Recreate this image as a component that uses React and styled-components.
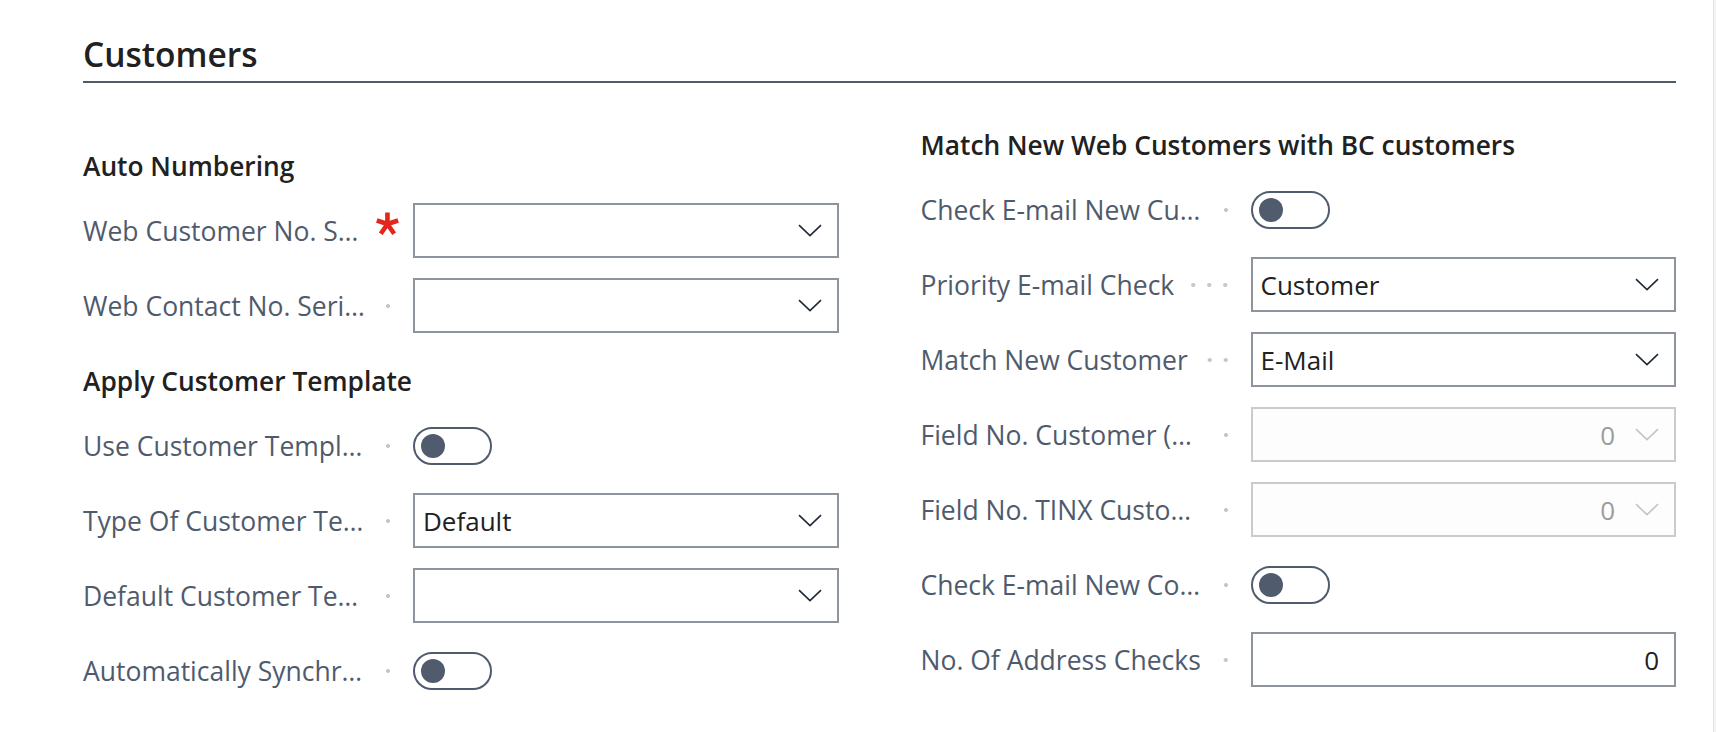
import React from "react";
import styled, { createGlobalStyle } from "styled-components";

const GlobalStyle = createGlobalStyle`
  html, body {
    margin: 0;
    padding: 0;
    background: #ffffff;
  }
  body {
    font-family: "Segoe UI", "Open Sans", "Noto Sans", sans-serif;
    color: #212121;
  }
  * {
    box-sizing: border-box;
  }
`;

const left = [
  { type: "heading", text: "Auto Numbering" },
  { type: "select", label: "Web Customer No. Series", required: true },
  { type: "select", label: "Web Contact No. Series" },
  { type: "heading", text: "Apply Customer Template" },
  { type: "toggle", label: "Use Customer Template" },
  { type: "select", label: "Type Of Customer Template", value: "Default" },
  { type: "select", label: "Default Customer Template" },
  { type: "toggle", label: "Automatically Synchronize Customers" },
];

const right = [
  { type: "heading", text: "Match New Web Customers with BC customers" },
  { type: "toggle", label: "Check E-mail New Customer" },
  { type: "select", label: "Priority E-mail Check", value: "Customer" },
  { type: "select", label: "Match New Customer", value: "E-Mail" },
  { type: "select", label: "Field No. Customer (Match)", value: "0", disabled: true },
  { type: "select", label: "Field No. TINX Customer (Match)", value: "0", disabled: true },
  { type: "toggle", label: "Check E-mail New Contact" },
  { type: "number", label: "No. Of Address Checks", value: "0" },
];

function Chevron({ disabled }) {
  return (
    <ChevronSvg viewBox="0 0 24 13" $disabled={disabled}>
      <path d="M1 1.2 L12 11.6 L23 1.2" />
    </ChevronSvg>
  );
}

function Asterisk() {
  return (
    <AsteriskSvg viewBox="0 0 28 28">
      <path d="M14 1 V14 M14 14 L2 10 M14 14 L26 10 M14 14 L6.5 25 M14 14 L21.5 25" />
    </AsteriskSvg>
  );
}

function Field({ item }) {
  if (item.type === "toggle") {
    return (
      <Toggle role="switch" aria-checked="false">
        <Knob />
      </Toggle>
    );
  }
  if (item.type === "number") {
    return (
      <Box>
        <Value $align="right">{item.value}</Value>
      </Box>
    );
  }
  return (
    <Box $disabled={item.disabled}>
      <Value $align={item.disabled ? "right" : "left"} $disabled={item.disabled}>
        {item.value || ""}
      </Value>
      <Chevron disabled={item.disabled} />
    </Box>
  );
}

function Column({ items, offset }) {
  return (
    <Col $offset={offset}>
      {items.map((item, i) =>
        item.type === "heading" ? (
          <GroupHeading key={i}>{item.text}</GroupHeading>
        ) : (
          <Row key={i}>
            <Caption>
              <CaptionText title={item.label}>{item.label}</CaptionText>
              {item.required ? (
                <Required>
                  <Asterisk />
                </Required>
              ) : (
                <Leader />
              )}
            </Caption>
            <Field item={item} />
          </Row>
        )
      )}
    </Col>
  );
}

export default function App() {
  return (
    <>
      <GlobalStyle />
      <Frame>
        <Main>
          <Header>Customers</Header>
          <Columns>
            <Column items={left} offset={21} />
            <Column items={right} offset={0} />
          </Columns>
        </Main>
        <Edge />
      </Frame>
    </>
  );
}

const Frame = styled.div`
  display: flex;
  width: 100%;
  height: 732px;
  overflow: hidden;
`;

const Main = styled.main`
  flex: 1;
  padding: 0 37px 0 83px;
`;

const Edge = styled.div`
  width: 3px;
  background: #f4f4f4;
  border-left: 1px solid #e2e2e2;
`;

const Header = styled.h1`
  margin: 0;
  padding: 36px 0 9px;
  line-height: 36px;
  font-size: 33.5px;
  font-weight: 600;
  color: #212121;
  border-bottom: 2px solid #505c6d;
`;

const Columns = styled.div`
  display: grid;
  grid-template-columns: 1fr 1fr;
  column-gap: 82px;
  padding-top: 24px;
`;

const Col = styled.section`
  display: flex;
  flex-direction: column;
  padding-top: ${(p) => p.$offset}px;
  min-width: 0;
`;

const GroupHeading = styled.h2`
  margin: 10px 0 0;
  height: 55px;
  display: flex;
  align-items: center;
  font-size: 26.3px;
  font-weight: 600;
  color: #212121;
  white-space: nowrap;
`;

const Row = styled.div`
  height: 75px;
  display: grid;
  grid-template-columns: 330px 1fr;
  align-items: center;
`;

const Caption = styled.div`
  display: flex;
  align-items: center;
  padding-right: 17px;
  min-width: 0;
`;

const CaptionText = styled.span`
  flex: 0 1 auto;
  min-width: 0;
  margin-right: 12px;
  white-space: nowrap;
  overflow: hidden;
  text-overflow: ellipsis;
  font-size: 26.5px;
  color: #4f5b6d;
`;

const Leader = styled.span`
  flex: 1 1 auto;
  min-width: 16px;
  height: 8px;
  background-image: radial-gradient(circle, #c6c6c6 1.7px, transparent 2.3px);
  background-size: 16px 8px;
  background-position: right center;
  background-repeat: repeat-x;
`;

const Required = styled.span`
  flex: 1 1 auto;
  min-width: 16px;
  display: flex;
  justify-content: flex-end;
  margin-right: -4px;
`;

const AsteriskSvg = styled.svg`
  width: 28px;
  height: 28px;
  margin-bottom: 14px;
  fill: none;
  stroke: #e3261c;
  stroke-width: 5.2;
  stroke-linecap: butt;
`;

const Box = styled.div`
  height: 55px;
  display: flex;
  align-items: center;
  padding: 0 15px 0 8px;
  border: 2px solid ${(p) => (p.$disabled ? "#cacbcd" : "#8e949c")};
  background: ${(p) => (p.$disabled ? "#fdfdfd" : "#ffffff")};
`;

const Value = styled.span`
  flex: 1;
  text-align: ${(p) => p.$align};
  font-size: 26px;
  color: ${(p) => (p.$disabled ? "#9c9c9c" : "#212121")};
  padding-right: ${(p) => (p.$disabled ? "20px" : "0")};
  white-space: nowrap;
`;

const ChevronSvg = styled.svg`
  width: 24px;
  height: 13px;
  flex: none;
  fill: none;
  stroke: ${(p) => (p.$disabled ? "#c4c4c4" : "#1e2a38")};
  stroke-width: 1.6;
`;

const Toggle = styled.div`
  width: 79px;
  height: 38px;
  display: flex;
  align-items: center;
  padding-left: 6px;
  border: 2px solid #505c6d;
  border-radius: 19px;
`;

const Knob = styled.span`
  width: 24px;
  height: 24px;
  border-radius: 50%;
  background: #505c6d;
`;
